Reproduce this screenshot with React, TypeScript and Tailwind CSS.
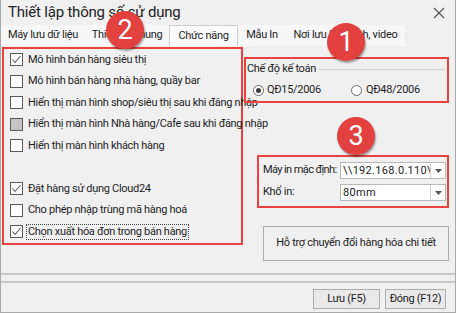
import React from 'react';

type CheckState = 'on' | 'off' | 'mixed';

const options: { label: string; state: CheckState; focus?: boolean }[] = [
  { label: 'Mô hình bán hàng siêu thị', state: 'on' },
  { label: 'Mô hình bán hàng nhà hàng, quầy bar', state: 'off' },
  { label: 'Hiển thị màn hình shop/siêu thị sau khi đăng nhập', state: 'off' },
  { label: 'Hiển thị màn hình Nhà hàng/Cafe sau khi đăng nhập', state: 'mixed' },
  { label: 'Hiển thị màn hình khách hàng', state: 'off' },
];

const options2: { label: string; state: CheckState; focus?: boolean }[] = [
  { label: 'Đặt hàng sử dụng Cloud24', state: 'on' },
  { label: 'Cho phép nhập trùng mã hàng hoá', state: 'off' },
  { label: 'Chọn xuất hóa đơn trong bán hàng', state: 'on', focus: true },
];

const tabs = [
  { label: 'Máy lưu dữ liệu', w: 'w-[84px]' },
  { label: 'Thiết lập chung', w: 'w-[84px]' },
  { label: 'Chức năng', w: 'w-[69px]', active: true },
  { label: 'Mẫu In', w: 'w-[48px]' },
  { label: 'Nơi lưu hình ảnh, video', w: 'w-[119px]' },
];

function CheckBox({ state }: { state: CheckState }) {
  const bg = state === 'mixed' ? 'bg-[#c4c4c4]' : 'bg-white';
  return (
    <span className={`w-[13px] h-[13px] border border-[#5a5a5a] flex items-center justify-center shrink-0 ${bg}`}>
      {state === 'on' && (
        <svg width="11" height="11" viewBox="0 0 11 11">
          <polyline points="1.5,5.5 4,8.5 9.5,2" fill="none" stroke="#5a5a5a" strokeWidth="1.1" />
        </svg>
      )}
    </span>
  );
}

function Row({ label, state, focus }: { label: string; state: CheckState; focus?: boolean }) {
  return (
    <div className="h-[21.5px] flex items-center gap-[3px] whitespace-nowrap">
      <CheckBox state={state} />
      <span className={focus ? 'border border-dotted border-[#444] px-[1px] leading-[14px]' : 'px-[2px]'}>{label}</span>
    </div>
  );
}

function Badge({ n, className }: { n: string; className: string }) {
  return (
    <div
      className={`absolute w-[38px] h-[38px] rounded-full bg-[#e2413f] text-white flex items-center justify-center text-[27px] tracking-normal leading-none shadow-[1px_2px_2px_rgba(0,0,0,0.35)] ${className}`}
    >
      {n}
    </div>
  );
}

function Dropdown({ value }: { value: string }) {
  return (
    <div className="w-[106px] h-[17px] flex border border-[#b9b9b9] bg-white shrink-0">
      <div className="flex-1 overflow-hidden whitespace-nowrap pl-[2px] leading-[15px] tracking-[0.3px]">{value}</div>
      <div className="w-[15px] border-l border-[#d2d2d2] flex items-center justify-center">
        <svg width="7" height="4" viewBox="0 0 7 4">
          <polygon points="0,0 7,0 3.5,4" fill="#555" />
        </svg>
      </div>
    </div>
  );
}

export default function App() {
  return (
    <div className="relative w-[456px] h-[313px] bg-[#f0f0f0] border border-t-0 border-[#a9a9a9] text-[11px] tracking-[-0.3px] text-[#1e1e1e] font-['Roboto',sans-serif] flex flex-col overflow-hidden">
      {/* title bar */}
      <div className="h-[25px] flex items-center justify-between pl-[7px] pr-[10px] shrink-0">
        <span className="text-[15px] tracking-[-0.2px] text-[#222] whitespace-nowrap">Thiết lập thông số sử dụng</span>
        <svg width="12" height="12" viewBox="0 0 12 12">
          <path d="M1 1 L11 11 M11 1 L1 11" stroke="#555" strokeWidth="1.2" />
        </svg>
      </div>

      {/* tabs */}
      <div className="h-[21px] flex shrink-0">
        <div className="flex bg-[#f7f7f7]">
          {tabs.map((t) => (
            <div
              key={t.label}
              className={
                t.active
                  ? `${t.w} flex items-center justify-center whitespace-nowrap bg-[#fbfbfb] border border-b-0 border-[#cfcfcf]`
                  : `${t.w} flex items-center justify-center whitespace-nowrap`
              }
            >
              {t.label}
            </div>
          ))}
        </div>
      </div>

      {/* content */}
      <div className="h-[229px] flex border-b-2 border-[#c8c8c8] shrink-0 pt-[1px]">
        <div className="w-[241px] h-[198px] ml-[1px] border-2 border-[#e8433e] pl-[6px] flex flex-col shrink-0">
          {options.map((o) => (
            <Row key={o.label} {...o} />
          ))}
          <div className="h-[21.5px]" />
          {options2.map((o) => (
            <Row key={o.label} {...o} />
          ))}
        </div>

        <div className="flex-1 flex flex-col pl-[1px] pr-[6px] pt-[10px]">
          <div className="h-[46px] border-2 border-[#e8433e] pl-[1px] pr-[2px] flex flex-col">
            <div className="h-[21px] flex items-center gap-[3px] whitespace-nowrap">
              <span>Chế độ kế toán</span>
              <div className="flex-1 h-px bg-[#d2d2d2]" />
            </div>
            <div className="flex items-center h-[21px] pl-[6px] whitespace-nowrap">
              <div className="w-[98px] flex items-center gap-[3px]">
                <span className="w-[11px] h-[11px] rounded-full border border-[#6a6a6a] bg-white flex items-center justify-center">
                  <span className="w-[5px] h-[5px] rounded-full bg-[#3a3a3a]" />
                </span>
                QĐ15/2006
              </div>
              <div className="flex items-center gap-[4px]">
                <span className="w-[11px] h-[11px] rounded-full border border-[#6a6a6a] bg-white" />
                QĐ48/2006
              </div>
            </div>
          </div>

          <div className="mt-[52px] ml-[13px] h-[53px] border-2 border-[#e8433e] flex flex-col justify-center gap-[5px] pl-[4px]">
            <div className="flex items-center whitespace-nowrap">
              <span className="w-[77px] tracking-[-0.6px]">Máy in mặc định:</span>
              <Dropdown value="\\192.168.0.110\RI" />
            </div>
            <div className="flex items-center whitespace-nowrap">
              <span className="w-[77px]">Khổ in:</span>
              <Dropdown value="80mm" />
            </div>
          </div>

          <div className="mt-[18px] ml-[19px] h-[35px] border border-[#adadad] bg-[#f0f0f0] flex items-center justify-center whitespace-nowrap">
            Hỗ trợ chuyển đổi hàng hóa chi tiết
          </div>
        </div>
      </div>

      {/* footer */}
      <div className="mt-[6px] flex-1 border-t-2 border-[#c8c8c8] flex justify-end items-start gap-[5px] pt-[6px] pr-[9px]">
        <div className="w-[67px] h-[20px] border border-[#adadad] bg-[#e9e9e9] flex items-center justify-center whitespace-nowrap">Lưu (F5)</div>
        <div className="w-[61px] h-[20px] border border-[#adadad] bg-[#e9e9e9] flex items-center justify-center whitespace-nowrap">Đóng (F12)</div>
      </div>

      <Badge n="2" className="left-[105px] top-[11px]" />
      <Badge n="1" className="left-[326px] top-[23px]" />
      <Badge n="3" className="left-[336px] top-[117px]" />
    </div>
  );
}
